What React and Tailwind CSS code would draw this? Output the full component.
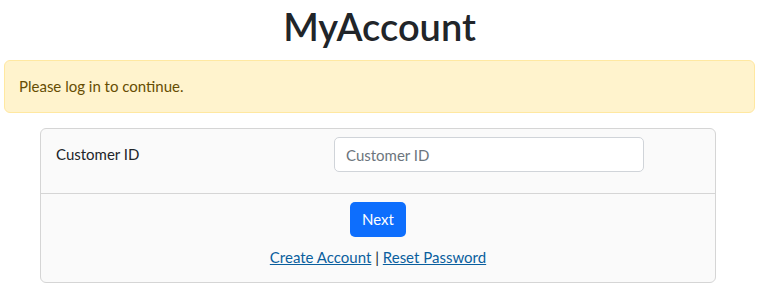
const App = () => {
  return (
    <div className="min-h-[289px] bg-white text-[#212529] font-['Segoe_UI','Lato','Noto_Sans',sans-serif]">
      {/* Title */}
      <h1 className="h-[54px] pt-[2px] text-center text-[38px] font-semibold leading-[48px]">MyAccount</h1>

      {/* Alert */}
      <div className="mx-1 mt-[6px] flex h-[53px] items-center rounded-md border border-[#ffe8a1] bg-[#fff3cd] px-[14px] text-[15px] text-[#664d03]">
        Please log in to continue.
      </div>

      {/* Card */}
      <div className="mx-[40px] mt-[15px] w-[676px] rounded-md border border-[#d5d5d5] bg-[#fafafa] text-[15px]">
        <div className="flex h-[65px] items-start border-b border-[#d5d5d5] pt-[8px] pl-[15px]">
          <label className="flex h-[35px] w-[278px] items-center">Customer ID</label>
          <input
            type="text"
            placeholder="Customer ID"
            className="h-[35px] w-[310px] rounded-[5px] border border-[#d0d4d9] bg-white px-[11px] text-[15px] placeholder-[#6c757d] outline-none"
          />
        </div>
        <div className="flex flex-col items-center pt-[8px] pb-[14px]">
          <button className="h-[35px] w-[56px] rounded-[5px] bg-[#0d6efd] text-[15px] text-white">Next</button>
          <div className="mt-[9px] leading-[22px]">
            <a href="#" className="text-[#0a5f9e] underline">Create Account</a>
            <span> | </span>
            <a href="#" className="text-[#0a5f9e] underline">Reset Password</a>
          </div>
        </div>
      </div>
    </div>
  );
};

export default App;
